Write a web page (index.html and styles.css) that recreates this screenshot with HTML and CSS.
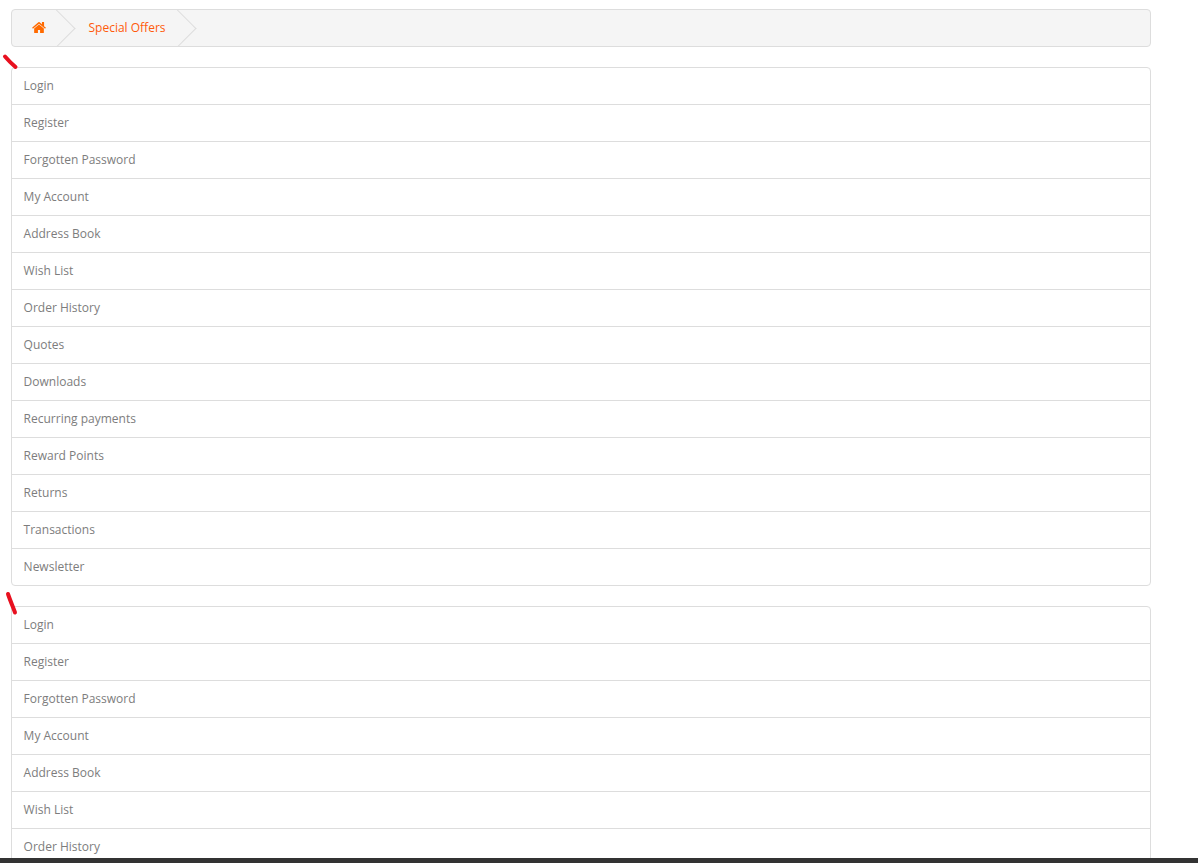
FILE: index.html
```html
<!DOCTYPE html>
<html lang="en">
<head>
    <meta charset="UTF-8">
    <meta name="viewport" content="width=device-width, initial-scale=1.0">
    <title>Special Offers</title>
    <link rel="stylesheet" href="styles.css">
</head>
<body>
    <div class="page">
        <div class="content">
            <ul class="breadcrumb">
                <li class="crumb crumb-home">
                    <a href="#" aria-label="Home">
                        <svg class="home-icon" viewBox="0 0 1664 1408" aria-hidden="true">
                            <path d="M1408 768v480q0 26-19 45t-45 19H960V928H704v384H320q-26 0-45-19t-19-45V768q0-1 .5-3t.5-3l575-474 575 474q1 2 1 6zm223-69l-62 74q-8 9-21 11h-3q-13 0-21-7L832 200 140 777q-12 8-24 7-13-2-21-11l-62-74q-8-10-7-23.500t11-21.500L756 26q32-26 76-26t76 26l272 227V36q0-14 9-23t23-9h192q14 0 23 9t9 23v454l219 182q10 8 11 21.500t-7 23.500z"/>
                        </svg>
                    </a>
                </li>
                <li class="crumb"><a href="#">Special Offers</a></li>
            </ul>

            <div class="list-group">
                <a href="#" class="list-item">Login</a>
                <a href="#" class="list-item">Register</a>
                <a href="#" class="list-item">Forgotten Password</a>
                <a href="#" class="list-item">My Account</a>
                <a href="#" class="list-item">Address Book</a>
                <a href="#" class="list-item">Wish List</a>
                <a href="#" class="list-item">Order History</a>
                <a href="#" class="list-item">Quotes</a>
                <a href="#" class="list-item">Downloads</a>
                <a href="#" class="list-item">Recurring payments</a>
                <a href="#" class="list-item">Reward Points</a>
                <a href="#" class="list-item">Returns</a>
                <a href="#" class="list-item">Transactions</a>
                <a href="#" class="list-item">Newsletter</a>
            </div>

            <!-- second list runs past the bottom of the window -->
            <div class="list-group">
                <a href="#" class="list-item">Login</a>
                <a href="#" class="list-item">Register</a>
                <a href="#" class="list-item">Forgotten Password</a>
                <a href="#" class="list-item">My Account</a>
                <a href="#" class="list-item">Address Book</a>
                <a href="#" class="list-item">Wish List</a>
                <a href="#" class="list-item">Order History</a>
            </div>
        </div>
        <div class="bottom-bar"></div>

        <!-- red marks drawn over the screenshot -->
        <svg class="marks" viewBox="0 0 30 620" aria-hidden="true">
            <path d="M5 56.500 C8 60 12 64 15.500 67"/>
            <path d="M8 594 C10 600 13 607 15 612.500"/>
        </svg>
    </div>
</body>
</html>
```

FILE: styles.css
```css
* {
    box-sizing: border-box;
}

html,
body {
    height: 100%;
    margin: 0;
}

body {
    font-family: "Open Sans", sans-serif;
    font-size: 12px;
    color: #777;
    background: #fff;
    overflow: hidden;
}

.page {
    position: relative;
    display: flex;
    flex-direction: column;
    height: 100vh;
}

.content {
    flex: 1;
    min-height: 0;
    overflow: hidden;
    padding: 9px 47px 0 11px;
}

.breadcrumb {
    display: flex;
    height: 38px;
    margin: 0 0 20px;
    padding: 0;
    list-style: none;
    background: #f5f5f5;
    border: 1px solid #ddd;
    border-radius: 4px;
    overflow: hidden;
}

.crumb {
    position: relative;
    display: flex;
    align-items: center;
    padding: 0 30px 2px 13.500px;
}

.crumb-home {
    padding: 0 29px 1px 20px;
}

.crumb a {
    display: flex;
    color: #ff5a0a;
    text-decoration: none;
}

.crumb::after {
    content: "";
    position: absolute;
    top: 5px;
    right: 5px;
    width: 26px;
    height: 26px;
    border-top: 1px solid #ddd;
    border-right: 1px solid #ddd;
    transform: rotate(45deg);
}

.home-icon {
    width: 14px;
    height: 12px;
    fill: #ff6a00;
}

.list-group {
    margin-bottom: 20px;
    background: #fff;
    border: 1px solid #ddd;
    border-radius: 4px;
}

.list-item {
    display: flex;
    align-items: center;
    height: 37px;
    padding: 0 11.600px 2px;
    border-top: 1px solid #ddd;
    color: #7d7d7d;
    text-decoration: none;
}

.list-item:first-child {
    height: 36px;
    border-top: 0;
}

.bottom-bar {
    flex: none;
    height: 5px;
    background: #333;
}

.marks {
    position: absolute;
    top: 0;
    left: 0;
    width: 30px;
    height: 620px;
    fill: none;
    stroke: #e8101f;
    stroke-width: 4;
    stroke-linecap: round;
}
```
